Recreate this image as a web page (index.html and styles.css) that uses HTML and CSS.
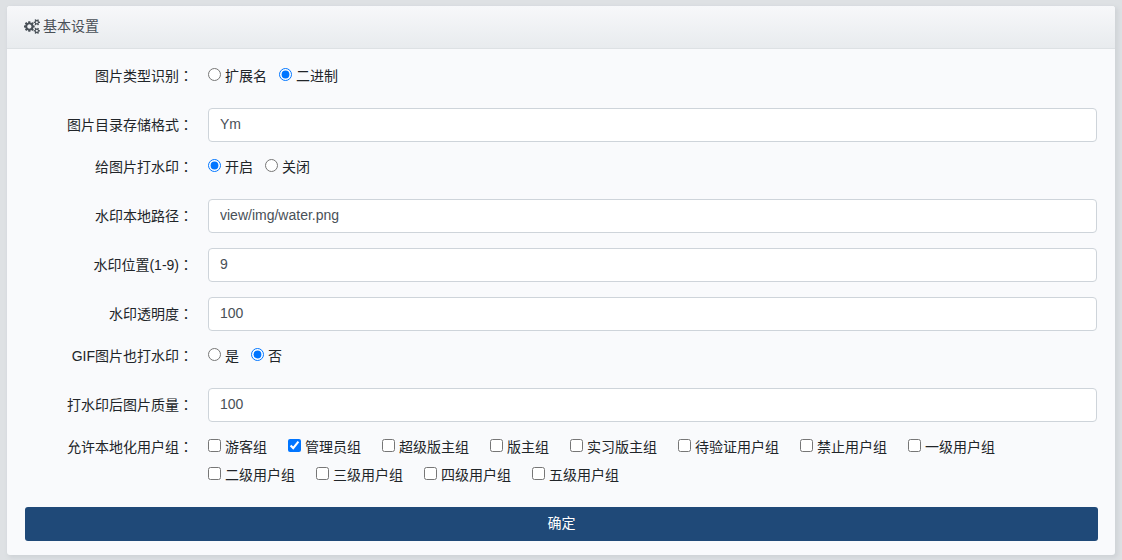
FILE: index.html
```html
<!DOCTYPE html>
<html lang="zh-CN">
<head>
<meta charset="utf-8">
<meta name="viewport" content="width=device-width, initial-scale=1">
<title>基本设置</title>
<link rel="stylesheet" href="styles.css">
</head>
<body>
<main class="card">
  <header class="card-header">
    <svg class="cogs" viewBox="0 0 1920 1792" aria-hidden="true"><path d="M896 896q0-106-75-181t-181-75-181 75-75 181 75 181 181 75 181-75 75-181zm768 512q0-52-38-90t-90-38-90 38-38 90q0 53 37.500 90.500t90.500 37.500 90.500-37.500 37.500-90.500zm0-1024q0-52-38-90t-90-38-90 38-38 90q0 53 37.500 90.500t90.500 37.500 90.500-37.500 37.500-90.500zm-384 421v185q0 10-7 19.500t-16 10.500l-155 24q-11 35-32 76 34 48 90 115 7 11 7 20 0 12-7 19-23 30-82.500 89.500t-78.500 59.500q-11 0-21-7l-115-90q-37 19-77 31-11 108-23 155-7 24-30 24h-186q-11 0-20-7.500t-10-17.500l-23-153q-34-10-75-31l-118 89q-7 7-20 7-11 0-21-8-144-133-144-160 0-9 7-19 10-14 41-53t47-61q-23-44-35-82l-152-24q-10-1-17-9.500t-7-19.500v-185q0-10 7-19.500t16-10.500l155-24q11-35 32-76-34-48-90-115-7-11-7-20 0-12 7-20 22-30 82-89t79-59q11 0 21 7l115 90q34-18 77-32 11-108 23-154 7-24 30-24h186q11 0 20 7.500t10 17.500l23 153q34 10 75 31l118-89q8-7 20-7 11 0 21 8 144 133 144 160 0 8-7 19-12 16-42 54t-45 60q23 48 34 82l152 23q10 2 17 10.500t7 19.500zm640 533v140q0 16-149 31-12 27-30 52 51 113 51 138 0 4-4 7-122 71-124 71-8 0-46-47t-52-68q-20 2-30 2t-30-2q-14 21-52 68t-46 47q-2 0-124-71-4-3-4-7 0-25 51-138-18-25-30-52-149-15-149-31v-140q0-16 149-31 13-29 30-52-51-113-51-138 0-4 4-7 4-2 35-20t59-34 30-16q8 0 46 46.500t52 67.500q20-2 30-2t30 2q51-71 92-112l6-2q4 0 124 70 4 3 4 7 0 25-51 138 17 23 30 52 149 15 149 31zm0-1024v140q0 16-149 31-12 27-30 52 51 113 51 138 0 4-4 7-122 71-124 71-8 0-46-47t-52-68q-20 2-30 2t-30-2q-14 21-52 68t-46 47q-2 0-124-71-4-3-4-7 0-25 51-138-18-25-30-52-149-15-149-31v-140q0-16 149-31 13-29 30-52-51-113-51-138 0-4 4-7 4-2 35-20t59-34 30-16q8 0 46 46.500t52 67.500q20-2 30-2t30 2q51-71 92-112l6-2q4 0 124 70 4 3 4 7 0 25-51 138 17 23 30 52 149 15 149 31z"/></svg>
    <span>基本设置</span>
  </header>
  <form class="card-body">
    <div class="row choice-row" role="radiogroup" aria-labelledby="l-type">
      <span class="row-label" id="l-type">图片类型识别<span lang="zh-TW">：</span></span>
      <div class="choices">
        <label class="choice"><input type="radio" name="type">扩展名</label>
        <label class="choice"><input type="radio" name="type" checked>二进制</label>
      </div>
    </div>
    <div class="row">
      <label class="row-label" for="dir">图片目录存储格式<span lang="zh-TW">：</span></label>
      <input class="text-input" id="dir" type="text" value="Ym">
    </div>
    <div class="row choice-row" role="radiogroup" aria-labelledby="l-mark">
      <span class="row-label" id="l-mark">给图片打水印<span lang="zh-TW">：</span></span>
      <div class="choices">
        <label class="choice"><input type="radio" name="mark" checked>开启</label>
        <label class="choice"><input type="radio" name="mark">关闭</label>
      </div>
    </div>
    <div class="row">
      <label class="row-label" for="path">水印本地路径<span lang="zh-TW">：</span></label>
      <input class="text-input" id="path" type="text" value="view/img/water.png">
    </div>
    <div class="row">
      <label class="row-label" for="pos">水印位置(1-9)<span lang="zh-TW">：</span></label>
      <input class="text-input" id="pos" type="text" value="9">
    </div>
    <div class="row">
      <label class="row-label" for="opacity">水印透明度<span lang="zh-TW">：</span></label>
      <input class="text-input" id="opacity" type="text" value="100">
    </div>
    <div class="row choice-row" role="radiogroup" aria-labelledby="l-gif">
      <span class="row-label" id="l-gif">GIF图片也打水印<span lang="zh-TW">：</span></span>
      <div class="choices">
        <label class="choice"><input type="radio" name="gif">是</label>
        <label class="choice"><input type="radio" name="gif" checked>否</label>
      </div>
    </div>
    <div class="row">
      <label class="row-label" for="quality">打水印后图片质量<span lang="zh-TW">：</span></label>
      <input class="text-input" id="quality" type="text" value="100">
    </div>
    <div class="row choice-row" role="group" aria-labelledby="l-groups">
      <span class="row-label" id="l-groups">允许本地化用户组<span lang="zh-TW">：</span></span>
      <div class="choices choices-wide">
        <label class="choice"><input type="checkbox">游客组</label>
        <label class="choice"><input type="checkbox" checked>管理员组</label>
        <label class="choice"><input type="checkbox">超级版主组</label>
        <label class="choice"><input type="checkbox">版主组</label>
        <label class="choice"><input type="checkbox">实习版主组</label>
        <label class="choice"><input type="checkbox">待验证用户组</label>
        <label class="choice"><input type="checkbox">禁止用户组</label>
        <label class="choice"><input type="checkbox">一级用户组</label>
        <label class="choice"><input type="checkbox">二级用户组</label>
        <label class="choice"><input type="checkbox">三级用户组</label>
        <label class="choice"><input type="checkbox">四级用户组</label>
        <label class="choice"><input type="checkbox">五级用户组</label>
      </div>
    </div>
    <button class="submit" type="button">确定</button>
  </form>
</main>
</body>
</html>
```

FILE: styles.css
```css
* {
  box-sizing: border-box;
}

body {
  margin: 0;
  padding: 6px 7px 5px;
  background: #dee1e4;
  color: #212529;
  font: 14px/20px "Liberation Sans", "Noto Sans CJK SC", sans-serif;
}

.card {
  background: #f9fafc;
  border-radius: 3px;
  box-shadow: 0 0 1px #d2d6d9, 2px 2px 4px 1px #cfd3d7;
}

.card-header {
  display: flex;
  align-items: center;
  gap: 3px;
  height: 43px;
  padding: 0 17px 2px;
  color: #495057;
  background: linear-gradient(#f7f8fa, #e8ebee);
  border-bottom: 1px solid #dde1e4;
  border-radius: 3px 3px 0 0;
}

.cogs {
  width: 16px;
  height: 15px;
  fill: currentColor;
}

.card-body {
  padding: 17px 17px 14px 18px;
}

.row {
  display: grid;
  grid-template-columns: 168px 1fr;
  column-gap: 15px;
  align-items: center;
  margin: 0 1px 15px 0;
}

.row-label {
  text-align: right;
}

.choice-row {
  align-items: start;
  margin-bottom: 14px;
}

.text-input {
  width: 100%;
  height: 34px;
  padding: 0 11px 2px;
  border: 1px solid #ced4da;
  border-radius: 4px;
  background: #fff;
  color: #495057;
  font: inherit;
}

.choices {
  display: flex;
  flex-wrap: wrap;
  column-gap: 12px;
}

.choices-wide {
  column-gap: 21px;
  padding-right: 80px;
}

.choice {
  display: flex;
  gap: 4px;
  padding-bottom: 8px;
}

.choice input {
  width: 13px;
  height: 13px;
  margin: 2px 0 0;
  accent-color: #0075ff;
}

.submit {
  display: block;
  width: 100%;
  height: 34px;
  padding: 0 0 2px;
  border: 0;
  border-radius: 3px;
  background: #1f4978;
  color: #fff;
  font: inherit;
}
```
